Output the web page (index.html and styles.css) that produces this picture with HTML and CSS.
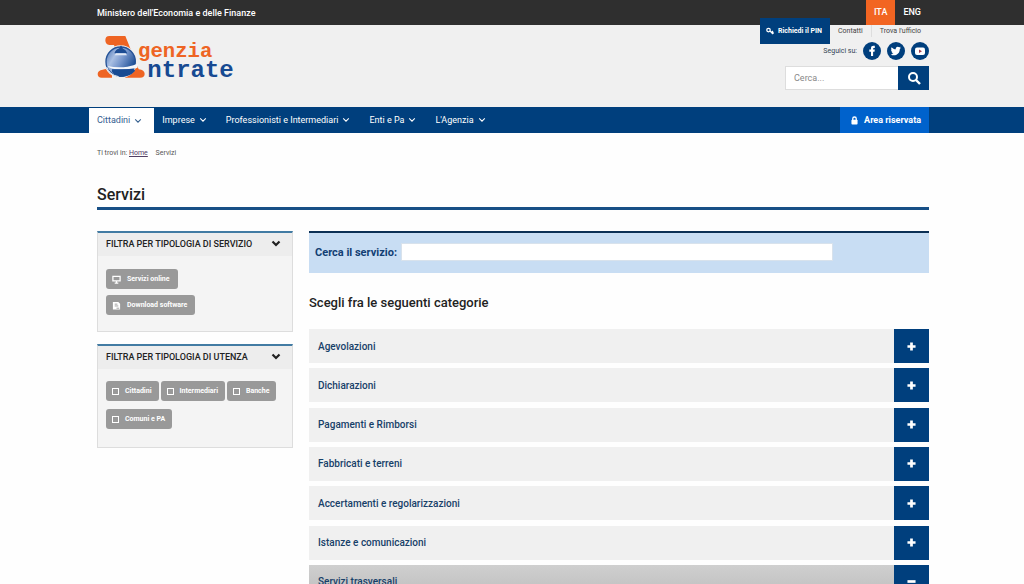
FILE: index.html
```html
<!DOCTYPE html>
<html lang="it">
<head>
<meta charset="utf-8">
<title>Servizi - Agenzia Entrate</title>
<link rel="stylesheet" href="styles.css">
</head>
<body>
<svg class="sprite" aria-hidden="true">
  <symbol id="chevron" viewBox="0 0 10 10"><path d="M1.5 3 5 6.5 8.500 3" fill="none" stroke="currentColor" stroke-width="1.300"/></symbol>
  <symbol id="chevron-bold" viewBox="0 0 10 10"><path d="M1.500 2.500 5 6 8.500 2.500" fill="none" stroke="currentColor" stroke-width="2.200"/></symbol>
  <symbol id="plus" viewBox="0 0 10 10"><path d="M3.500.5h3v3h3v3h-3v3h-3v-3h-3v-3h3z" fill="currentColor"/></symbol>
  <symbol id="minus" viewBox="0 0 10 10"><path d="M.5 3.500h9v3h-9z" fill="currentColor"/></symbol>
</svg>

<div class="topbar">
  <div class="container topbar-row">
    <a class="ministry" href="#">Ministero dell'Economia e delle Finanze</a>
    <nav class="languages" aria-label="Lingua">
      <a class="language language-active" href="#">ITA</a>
      <a class="language" href="#">ENG</a>
    </nav>
  </div>
</div>

<header class="header">
  <div class="container header-row">
    <a class="logo" href="#" aria-label="Agenzia Entrate">
      <svg viewBox="51 99 420 156" width="140" height="52">
        <defs>
          <linearGradient id="dome" x1="0" y1="0" x2="1" y2=".6">
            <stop offset="0" stop-color="#3c68ab"/><stop offset=".35" stop-color="#a9bfe3"/><stop offset=".6" stop-color="#7595cb"/><stop offset="1" stop-color="#174a92"/>
          </linearGradient>
        </defs>
        <path d="M88 108h48l40 100q18 2 18 14 0 11-14 11h-44l-34-98H88q-12-2-12-14 0-13 12-13z" fill="#ee6423"/>
        <path d="M76 207l20 6v20H65q-12 0-12-11t15-13z" fill="#ee6423"/>
        <circle cx="122" cy="185" r="49" fill="#f0f0f0"/>
        <circle cx="122" cy="185" r="44" fill="url(#dome)" stroke="#245297" stroke-width="4"/>
        <path d="M103 160q4-12 15-15l5-9 5 9q10 4 14 15z" fill="#1c4c93"/>
        <path d="M108 160h29l4 6h-37z" fill="#dfe8f5"/>
        <path d="M82 198q30 6 60 2 20-3 33-10l-3 14q-30 5-60 4-18 0-30-10z" fill="#f4f7fc"/>
        <path d="M96 208h58q14-2 10 6-14 16-36 16-23-2-32-15z" fill="#174a92"/>
        <path d="M80 201q8 24 36 29" fill="none" stroke="#f0f4fa" stroke-width="3"/>
        <text class="logo-top" x="174" y="170">genzia</text>
        <text class="logo-bottom" x="202" y="232">ntrate</text>
      </svg>
    </a>
    <div class="tools">
      <div class="quick-links">
        <a class="pin" href="#">
          <svg viewBox="0 0 16 16" width="8" height="8"><circle cx="5" cy="6" r="3.500" fill="none" stroke="currentColor" stroke-width="2.500"/><path d="M8 8l6 6M11 11l3-3M14 14v-4" stroke="currentColor" stroke-width="2.500"/></svg>
          Richiedi il PIN
        </a>
        <a class="quick-link" href="#">Contatti</a>
        <a class="quick-link quick-link-last" href="#">Trova l'ufficio</a>
      </div>
      <div class="social">
        <span class="social-label">Seguici su:</span>
        <a href="#" aria-label="Facebook"><svg viewBox="0 0 18 18" width="18" height="18"><circle cx="9" cy="9" r="9" fill="#003f7d"/><path d="M8 14V9.800H6.300V7.600H8V6.300C8 4.500 9 3.800 10.500 3.800h1.300v2.100h-.9c-.6 0-.8.3-.8.8v.9h1.700l-.3 2.200h-1.400V14z" fill="#fff"/></svg></a>
        <a href="#" aria-label="Twitter"><svg viewBox="0 0 18 18" width="18" height="18"><circle cx="9" cy="9" r="9" fill="#003f7d"/><path d="M4.600 5.200c1.100 1.300 2.500 2 4.200 2.100C8.500 5.800 9.500 4.700 10.800 4.700c.6 0 1.100.2 1.500.6l1.400-.5-.9 1.200 1.200-.3-1.200 1.200c.1 3.700-2.700 6.400-6 6.400-1.200 0-2.200-.3-3.100-.9 1.100.1 2.100-.2 2.900-.8-.9-.1-1.600-.6-1.900-1.400h.9c-1-.3-1.600-1.100-1.600-2.100l.9.300c-.9-.8-1-2-.3-3.200z" fill="#fff"/></svg></a>
        <a href="#" aria-label="YouTube"><svg viewBox="0 0 18 18" width="18" height="18"><circle cx="9" cy="9" r="9" fill="#003f7d"/><rect x="4" y="5.500" width="10" height="7.500" rx="2" fill="#fff"/><path d="M8 7.400v3.600l3-1.800z" fill="#a33a4a"/></svg></a>
      </div>
      <form class="site-search">
        <input class="site-search-input" type="text" placeholder="Cerca..." aria-label="Cerca nel sito">
        <button class="site-search-button" type="button" aria-label="Cerca"><svg viewBox="0 0 14 14" width="14" height="14"><circle cx="6" cy="6" r="4" fill="none" stroke="currentColor" stroke-width="2"/><path d="M9 9l4 4" stroke="currentColor" stroke-width="2.400"/></svg></button>
      </form>
    </div>
  </div>
</header>

<nav class="mainnav" aria-label="Menu principale">
  <div class="container mainnav-row">
    <a class="tab tab-active" href="#">Cittadini <svg class="caret"><use href="#chevron"/></svg></a>
    <a class="tab" href="#">Imprese <svg class="caret"><use href="#chevron"/></svg></a>
    <a class="tab" href="#">Professionisti e Intermediari <svg class="caret"><use href="#chevron"/></svg></a>
    <a class="tab" href="#">Enti e Pa <svg class="caret"><use href="#chevron"/></svg></a>
    <a class="tab" href="#">L'Agenzia <svg class="caret"><use href="#chevron"/></svg></a>
    <a class="reserved" href="#"><svg viewBox="0 0 8 10" width="7" height="9"><path d="M2 5V3a2 2 0 0 1 4 0v2" fill="none" stroke="currentColor" stroke-width="1.500"/><rect x=".5" y="4" width="7" height="5.500" rx="1" fill="currentColor"/></svg>Area riservata</a>
  </div>
</nav>

<main class="container">
  <div class="breadcrumb">Ti trovi in: <a href="#">Home</a> <span class="breadcrumb-current">Servizi</span></div>
  <h1 class="title">Servizi</h1>
  <div class="columns">
    <aside class="filters">
      <section class="panel">
        <button class="panel-head" type="button">FILTRA PER TIPOLOGIA DI SERVIZIO <svg class="panel-caret"><use href="#chevron-bold"/></svg></button>
        <div class="panel-body">
          <button class="chip chip-wide" type="button"><svg viewBox="0 0 10 10" width="9" height="9"><path d="M1 1.500h8v5H1zM3 9h4M5 6v3" fill="none" stroke="currentColor" stroke-width="1.400"/></svg>Servizi online</button>
          <button class="chip chip-wide" type="button"><svg viewBox="0 0 10 10" width="9" height="9"><path d="M1 1h6l2 2v6.500H1z" fill="currentColor"/><path d="M3 3.500h3M3 5.500h4M5 8h3" stroke="#999" stroke-width="1"/></svg>Download software</button>
        </div>
      </section>
      <section class="panel">
        <button class="panel-head" type="button">FILTRA PER TIPOLOGIA DI UTENZA <svg class="panel-caret"><use href="#chevron-bold"/></svg></button>
        <div class="panel-body panel-body-users">
          <label class="chip"><input class="chip-box" type="checkbox">Cittadini</label>
          <label class="chip"><input class="chip-box" type="checkbox">Intermediari</label>
          <label class="chip"><input class="chip-box" type="checkbox">Banche</label>
          <label class="chip"><input class="chip-box" type="checkbox">Comuni e PA</label>
        </div>
      </section>
    </aside>
    <div class="content">
      <form class="service-search">
        <label class="service-label" for="service">Cerca il servizio:</label>
        <input class="service-input" id="service" type="text">
      </form>
      <h2 class="subtitle">Scegli fra le seguenti categorie</h2>
      <div class="categories">
        <button class="category" type="button"><span class="category-name">Agevolazioni</span><span class="toggle"><svg class="sign"><use href="#plus"/></svg></span></button>
        <button class="category" type="button"><span class="category-name">Dichiarazioni</span><span class="toggle"><svg class="sign"><use href="#plus"/></svg></span></button>
        <button class="category" type="button"><span class="category-name">Pagamenti e Rimborsi</span><span class="toggle"><svg class="sign"><use href="#plus"/></svg></span></button>
        <button class="category" type="button"><span class="category-name">Fabbricati e terreni</span><span class="toggle"><svg class="sign"><use href="#plus"/></svg></span></button>
        <button class="category" type="button"><span class="category-name">Accertamenti e regolarizzazioni</span><span class="toggle"><svg class="sign"><use href="#plus"/></svg></span></button>
        <button class="category" type="button"><span class="category-name">Istanze e comunicazioni</span><span class="toggle"><svg class="sign"><use href="#plus"/></svg></span></button>
        <button class="category category-open" type="button"><span class="category-name">Servizi trasversali</span><span class="toggle"><svg class="sign"><use href="#minus"/></svg></span></button>
      </div>
    </div>
  </div>
</main>
</body>
</html>
```
FILE: styles.css
```css
* { box-sizing: border-box; }
body {
  margin: 0;
  background: #fefefe;
  color: #222;
  font-family: Roboto, "Liberation Sans", sans-serif;
  font-size: 9px;
}
a { color: inherit; text-decoration: none; }
button, input { font: inherit; color: inherit; border: 0; padding: 0; margin: 0; border-radius: 0; }
svg { flex: none; display: block; }
.sprite { position: absolute; width: 0; height: 0; }
.container { box-sizing: content-box; max-width: 832px; margin: 0 auto; padding-left: 2px; }

.topbar { background: #2f2f2f; color: #fff; }
.topbar-row { display: flex; justify-content: space-between; align-items: center; }
.ministry { font-weight: 500; }
.languages { display: flex; }
.language { padding: 0 8px; line-height: 25px; font-weight: 500; }
.language-active { background: #f26522; }

.header { background: #f0f0f0; }
.header-row { display: flex; justify-content: space-between; align-items: flex-start; min-height: 82px; }
.logo { margin-top: 8px; }
.logo-top, .logo-bottom { font-family: "Liberation Mono", monospace; font-weight: 700; }
.logo-top { font-size: 62px; fill: #ee6423; }
.logo-bottom { font-size: 72px; fill: #174a92; }
.tools { display: flex; flex-direction: column; align-items: flex-end; }
.quick-links { display: flex; align-items: flex-start; font-size: 7px; line-height: 12px; padding-right: 8px; color: #444; }
.pin {
  display: flex; align-items: center; gap: 4px;
  margin-top: -7px; padding: 0 8px 0 6px;
  line-height: 26px; font-weight: 700;
  background: #003f7d; color: #fff;
}
.quick-link { padding: 0 8px; }
.quick-link-last { padding-right: 0; border-left: 1px solid #ddd; }
.social { display: flex; align-items: center; gap: 6px; margin-top: -2px; color: #345; font-size: 7px; }
.site-search { display: flex; margin-top: 6px; }
.site-search-input { width: 113px; height: 24px; padding: 0 8px; background: #fff; border: 1px solid #ddd; border-right: 0; font-size: 9px; }
.site-search-input::placeholder { color: #888; }
.site-search-button { display: grid; place-items: center; width: 31px; background: #003f7d; color: #fff; }

.mainnav { background: #003f7d; color: #fff; }
.mainnav-row { display: flex; align-items: stretch; line-height: 26px; }
.tab { display: flex; align-items: center; gap: 4px; padding: 0 11px 0 8px; }
.tab-active { margin: 1px 0 0 -8px; padding-right: 12px; line-height: 25px; background: #fff; color: #35608f; }
.caret { width: 8px; height: 8px; }
.reserved { display: flex; align-items: center; gap: 6px; margin-left: auto; padding: 0 8px 0 11px; background: #0062cc; font-weight: 700; }

.breadcrumb { padding-top: 14px; line-height: 12px; font-size: 7px; color: #555; }
.breadcrumb a { text-decoration: underline; color: #524066; }
.breadcrumb-current { margin-left: 6px; }
.title { margin: 26px 0 0; padding-bottom: 2px; border-bottom: 3px solid #174f86; font-size: 16px; line-height: 20px; font-weight: 500; }
.columns { display: flex; gap: 16px; margin-top: 21px; align-items: flex-start; }
.filters { flex: 0 0 196px; display: grid; gap: 12px; }
.panel { background: #f4f4f4; border: 1px solid #ddd; border-top: 2px solid #427ba3; }
.panel-head {
  display: flex; justify-content: space-between; align-items: center;
  width: 100%; height: 23px; padding: 0 11px 1px 8px;
  background: #ededed; font-weight: 500;
}
.panel-caret { width: 10px; height: 10px; }
.panel-body { display: flex; flex-direction: column; align-items: flex-start; gap: 6px; padding: 13px 8px 16px; }
.panel-body-users { flex-flow: row wrap; gap: 8px 2px; padding: 12px 8px 18px; }
.chip {
  display: flex; align-items: center; gap: 5px;
  height: 20px; padding: 0 7px 0 6px;
  border-radius: 3px; background: #999; color: #fff;
  font-size: 7px; font-weight: 700;
}
.chip-wide { padding-right: 8px; gap: 6px; }
.chip-box { appearance: none; width: 7px; height: 7px; margin: 0 1px 0 0; border: 1px solid #fff; }

.content { flex: 1; min-width: 0; }
.service-search { display: flex; align-items: center; gap: 4px; min-height: 42px; padding: 0 6px 2px; background: #c8ddf3; border-top: 2px solid #0b3055; }
.service-label { font-size: 11px; font-weight: 700; color: #123f73; }
.service-input { flex: 0 1 432px; height: 18px; padding: 0 6px; background: #fff; border: 1px solid #d8e2ec; }
.subtitle { margin: 20px 0 16px; font-size: 13px; line-height: 20px; font-weight: 500; }
.categories { display: grid; align-content: space-between; min-height: 270px; }
.category { display: flex; align-items: stretch; width: 100%; min-height: 34px; background: #f0f0f0; color: #174069; text-align: left; font-size: 10px; font-weight: 500; }
.category-open { background: linear-gradient(#cfcfcf, #bdbdbd); }
.category-name { flex: 1; align-self: center; padding-left: 9px; }
.toggle { display: grid; place-items: center; width: 35px; background: #003f7d; color: #fff; }
.sign { width: 9px; height: 9px; }
```
